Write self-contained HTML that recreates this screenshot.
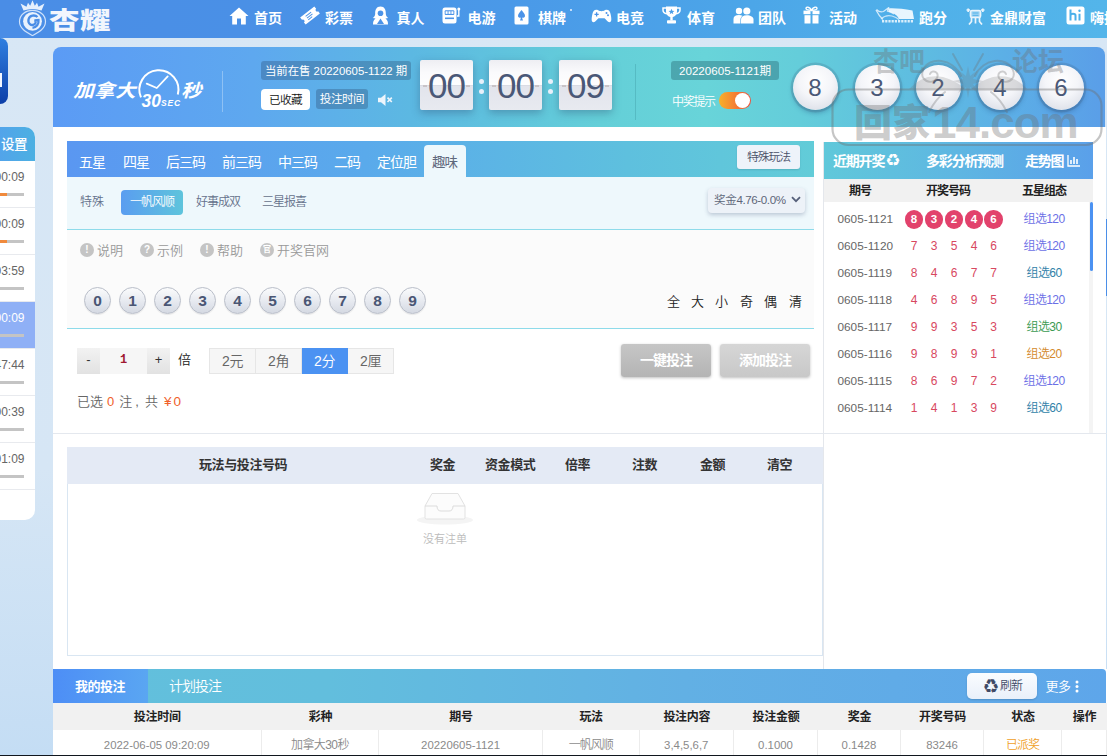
<!DOCTYPE html>
<html lang="zh-CN">
<head>
<meta charset="utf-8">
<title>加拿大30秒</title>
<style>
*{box-sizing:border-box;margin:0;padding:0}
html,body{width:1107px;height:756px;overflow:hidden}
body{position:relative;background:linear-gradient(180deg,#d8e7f5 0%,#d6e6f5 62%,#c4ddf4 100%);font-family:"Liberation Sans","Noto Sans CJK SC",sans-serif;font-size:12px;color:#333;line-height:1;font-weight:350}
.abs{position:absolute}
/* header */
#hdr{position:absolute;left:0;top:0;width:1107px;height:37.5px;background:linear-gradient(90deg,#4a8de6 0%,#4a90e6 22%,#4a99e8 46%,#4ca6e8 68%,#50b0e9 82%,#53b5ea 100%)}
#hdr .nav{position:absolute;top:0;height:37px;line-height:36px;color:#fff;font-weight:bold;font-size:14px;white-space:nowrap}
#hdr .nav svg{position:absolute;top:0;left:0}
#logo{position:absolute;left:49px;top:1px;font-size:30.5px;font-weight:900;color:#f2f6fd;line-height:37px;letter-spacing:0.5px;transform:scaleY(.8);transform-origin:0 22px;white-space:nowrap}
/* left */
#lblue{position:absolute;left:0;top:38px;width:8px;height:66px;background:linear-gradient(180deg,#2f7fe0,#0d3fa8);border-radius:0 8px 8px 0}
#lset{position:absolute;left:0;top:127px;width:35px;height:393px;background:#fff;border-radius:0 10px 10px 0;overflow:hidden}
#lset .h{font-weight:500;height:34px;background:linear-gradient(90deg,#52a4ea,#4cb0e2);color:#fff;font-size:13.5px;line-height:35px;padding-left:1px;letter-spacing:-.5px}
#lset .r{height:47px;border-bottom:1px solid #e8eaee;position:relative;color:#666;font-size:12px}
#lset .r span{position:absolute;right:10.5px;top:10px;white-space:nowrap}
#lset .r i{position:absolute;left:0;top:32px;width:24px;height:3px;background:#c4c4c4}
#lset .r i.o{background:linear-gradient(90deg,#f08a3c 0,#f08a3c 7px,#c4c4c4 7px)}
#lset .r.on{background:#8fb0f6;color:#fff}
/* banner */
#ban{position:absolute;left:53px;top:47px;width:1052px;height:80px;border-radius:8px 8px 0 0;background:linear-gradient(90deg,#5b9bf5 0%,#5ea8ef 19%,#5cb8e2 34%,#64cfd8 52%,#68d4d9 62%,#64cdda 71%,#5fc0df 80%,#5cb0e6 90%,#5a9ee8 100%)}
#main{position:absolute;left:53px;top:127px;width:1053px;height:542px;background:#fff}

/* banner items */
.badge{font-weight:400;position:absolute;height:19px;line-height:19px;border-radius:3px;background:rgba(40,70,110,.32);color:#fff;font-size:11.6px;text-align:center;white-space:nowrap}
.flip{position:absolute;top:13px;width:53px;height:50px;border-radius:2px;background:linear-gradient(180deg,#eeeef3 0%,#fafafc 25%,#fdfdfe 49%,#d4d7e0 50%,#e2e4ec 53%,#e8eaf0 100%);box-shadow:0 3px 8px rgba(40,60,100,.35);color:#4a5877;font-size:35px;line-height:52px;text-align:center;letter-spacing:-1px}
.flip:before,.flip:after{content:"";position:absolute;top:25px;width:4px;height:1.5px;background:#c9c4c8}
.flip:before{left:3px}.flip:after{right:3px}
.colon{position:absolute;width:5px;height:5px;border-radius:50%;background:#e8f0fa}
.ball{position:absolute;top:17.5px;width:45px;height:45px;margin-left:1.5px;border-radius:50%;background:radial-gradient(circle at 50% 35%,#ffffff 0%,#f4f5f9 45%,#dfe2ea 80%,#cfd3de 100%);box-shadow:0 0 0 2.5px rgba(60,90,120,.2),0 3px 5px rgba(30,60,110,.35);color:#4a5877;font-size:24px;line-height:45px;text-align:center}

/* main */
#tabs{position:absolute;left:14px;top:14px;width:747px;height:36px;background:linear-gradient(90deg,#5a97f1 0%,#5ba2ee 22%,#5aaaeb 40%,#5ec0de 75%,#62ccd8 100%)}
#tabs span{position:absolute;top:1px;height:35px;line-height:41px;color:#fff;font-weight:400;font-size:14px;letter-spacing:-1px;white-space:nowrap}
#tabs span.on{top:4px;height:32px;line-height:35px;background:#eef8fc;color:#5f687c;font-size:13.5px;border-radius:4px 4px 0 0;width:42px;text-align:center;padding-right:1px}
#sub{position:absolute;left:14px;top:50px;width:747px;height:53px;background:#eef8fc;border-bottom:1px solid #8edbea}
#sub span{position:absolute;top:19px;font-size:12px;color:#65718b;letter-spacing:0;white-space:nowrap}
.help{position:absolute;top:117px;font-size:13px;color:#999;white-space:nowrap;line-height:14px}
.help i{position:absolute;left:-17px;top:-1px;width:14px;height:14px;border-radius:50%;background:#c4c4c4;color:#fff;font-style:normal;font-size:10px;font-weight:bold;line-height:14px;text-align:center}
.nb{position:absolute;top:159.5px;width:27px;height:27px;border-radius:50%;border:1px solid #b9bec9;background:linear-gradient(180deg,#fafbfc 0%,#e4e7ee 60%,#d5d9e2 100%);color:#4a5674;font-size:15.5px;font-weight:bold;line-height:25px;text-align:center;box-shadow:0 1px 1px rgba(0,0,0,.08)}
.qk{position:absolute;top:168px;font-size:13px;color:#222}
.ub{position:absolute;top:220.5px;height:26px;width:46px;background:#f6f6f6;border:1px solid #e6e6e6;border-left:none;color:#666;font-size:14px;text-align:center;line-height:24px;letter-spacing:-.5px}
.gbtn{position:absolute;top:217px;height:33px;width:90px;border-radius:3px;color:#fff;font-size:14px;font-weight:bold;letter-spacing:-1px;text-align:center;line-height:32px;box-shadow:0 1px 3px rgba(0,0,0,.25)}
#tbl{position:absolute;left:14px;top:320px;width:756px;height:209px;border:1px solid #d9e6f2;background:#fff}
#tbl .th{position:absolute;left:-1px;top:-1px;width:756px;height:36.5px;background:#e4eaf5}
#tbl .th span{position:absolute;top:0;line-height:36.5px;font-size:13px;font-weight:bold;color:#333;letter-spacing:-.4px;white-space:nowrap}

/* right panel */
#rp{position:absolute;left:824px;top:142px;width:269px;height:291px;background:#fff;overflow:hidden}
#rp .h{position:absolute;left:0;top:0;width:269px;height:36.5px;background:linear-gradient(90deg,#60c8da 0%,#5eb6e2 50%,#5aa0ea 100%)}
#rp .h span{position:absolute;top:0;line-height:38px;color:#fff;font-size:14px;font-weight:bold;letter-spacing:-1.2px;white-space:nowrap}
#rp .sh{position:absolute;left:0;top:36.5px;width:269px;height:23.5px;background:#f1f1f1}
#rp .sh span{position:absolute;top:0;line-height:24px;font-size:12px;font-weight:bold;color:#222;letter-spacing:-1px;white-space:nowrap}
#rp .row{position:absolute;left:0;width:270px;height:27px;line-height:27px;font-size:11.8px;color:#666;white-space:nowrap}
#rp .row .q{position:absolute;left:13.5px}
#rp .row .n{position:absolute;width:20px;text-align:center;color:#d8485f;font-size:12px}
#rp .row .rb{position:absolute;top:4px;width:18.5px;height:18.5px;border-radius:50%;background:#e2426c;color:#fff;font-size:11.5px;font-weight:bold;line-height:18.5px;text-align:center}
#rp .row .z{position:absolute;left:180px;width:80px;text-align:center;letter-spacing:-.6px;font-size:12px}
/* bottom */
#bt{position:absolute;left:53px;top:669px;width:1054px;height:87px;background:#fff}
#bt .bar{position:absolute;left:0;top:0;width:1053px;height:34px;border-radius:0 4px 0 0;background:linear-gradient(90deg,#62c0dc 0%,#62bedd 26%,#62b0e4 60%,#5ea6ea 100%)}
#bt .bar span{position:absolute;top:0;line-height:35px;color:#fff;white-space:nowrap}
#bt .thr{position:absolute;left:0;top:34px;width:1054px;height:27px;background:#f1f1f1}
#bt .thr span{position:absolute;top:0;line-height:29px;color:#2c3146;font-size:12px;font-weight:bold;color:#222;text-align:center;letter-spacing:-.3px;white-space:nowrap}
#bt .tr span{position:absolute;top:61px;height:27px;line-height:30px;font-size:11.4px;color:#8a8a8a;text-align:center;white-space:nowrap;border-right:1px solid #ececec}
</style>
</head>
<body>
<div id="hdr">
 <svg class="abs" style="left:17px;top:0" width="32" height="37" viewBox="0 0 32 37"><path d="M6.500 10.500 L3.500 3.500 L9.500 6.800 L11 2.800 L13.200 5.800 L15.500 0.300 L17.800 5.800 L20 2.800 L21.500 6.800 L27.500 3.500 L24.500 10.500 Q15.500 7.500 6.500 10.500 Z" fill="#e6f0fd"/><path d="M15.500 10.300 C22.500 10.300 28.500 15 28.500 21.500 C28.500 28.500 22 32 15.500 35.600 C9 32 2.500 28.500 2.500 21.500 C2.500 15 8.500 10.300 15.500 10.300 Z" fill="none" stroke="#cfe2fb" stroke-width="1.200"/><circle cx="15.500" cy="21.300" r="9.400" fill="#e9f2fd"/><path d="M20.500 17 C18 14.500 12.500 15 11.500 19.500 C10.800 23.500 14 26 17 24.500 C19 23.500 19.300 21 17.500 20.500 L21.500 20 C22 24 19.500 27.500 15.500 27.800" fill="none" stroke="#4a8de6" stroke-width="2.300"/></svg>
 <div id="logo">杏耀</div>
 <svg class="abs" style="left:229px;top:7px" width="20" height="18" viewBox="0 0 20 18"><path d="M10 0.5 L0.5 9 H3.2 V17.5 H8 V11.5 H12 V17.5 H16.8 V9 H19.5 Z" fill="#fff"/></svg><span class="nav" style="left:254px">首页</span>
 <svg class="abs" style="left:300px;top:6px" width="20" height="19" viewBox="0 0 20 19"><g transform="rotate(-38 10 9.5)"><path d="M1 5 H19 V8 A1.6 1.6 0 0 0 19 11.2 V14 H1 V11.2 A1.6 1.6 0 0 0 1 8 Z" fill="#fff"/><path d="M6 7.5H13M6 9.7H13M6 11.8H11" stroke="#4b93e8" stroke-width="1"/></g></svg><span class="nav" style="left:325px">彩票</span>
 <svg class="abs" style="left:372px;top:6px" width="17" height="19" viewBox="0 0 17 19"><path d="M8.5 0.5 C4.5 0.5 3 4 3.2 7.5 C3.3 9.5 2 11 0.8 12 L3.5 12.6 C1.5 14 1 16 1 18.5 H16 C16 16 15.5 14 13.5 12.6 L16.2 12 C15 11 13.7 9.5 13.8 7.5 C14 4 12.5 0.5 8.5 0.5 Z" fill="#fff"/><circle cx="8.5" cy="7.2" r="2.8" fill="#4b93e8"/><path d="M5 18 L8.5 12.5 L12 18 Z" fill="#4b93e8"/></svg><span class="nav" style="left:396.5px">真人</span>
 <svg class="abs" style="left:442px;top:7px" width="19" height="17" viewBox="0 0 19 17"><rect x="0.5" y="0.5" width="14" height="16" rx="2.5" fill="#fff"/><rect x="2.7" y="3.3" width="9.6" height="4.6" rx="1" fill="#4b93e8"/><rect x="3.6" y="4.3" width="2" height="2.6" fill="#fff"/><rect x="6.5" y="4.3" width="2" height="2.6" fill="#fff"/><rect x="9.4" y="4.3" width="2" height="2.6" fill="#fff"/><rect x="3" y="10.5" width="9" height="1.6" fill="#4b93e8"/><path d="M16.8 2.5 V9 H15" stroke="#fff" stroke-width="1.4" fill="none"/><circle cx="16.8" cy="2" r="1.5" fill="#fff"/></svg><span class="nav" style="left:467.5px">电游</span>
 <svg class="abs" style="left:514px;top:6px" width="15" height="19" viewBox="0 0 15 19"><rect x="0.5" y="0.5" width="14" height="18" rx="1.5" fill="#fff"/><path d="M7.5 4 C9.5 6.5 11 8 11 10 A2 2 0 0 1 8 11.5 L9 14.5 H6 L7 11.5 A2 2 0 0 1 4 10 C4 8 5.5 6.5 7.5 4 Z" fill="#4b93e8"/></svg><span class="nav" style="left:538px">棋牌</span>
 <svg class="abs" style="left:591px;top:9px" width="21" height="14" viewBox="0 0 21 14"><path d="M5.5 0.8 C3 0.8 1.8 2.5 1.2 6 C0.6 9.5 0 13.2 2.6 13.2 C4.5 13.2 5.5 10.5 7.5 9.2 H13.5 C15.5 10.5 16.5 13.2 18.4 13.2 C21 13.2 20.4 9.5 19.8 6 C19.2 2.5 18 0.8 15.5 0.8 C13.5 0.8 13.5 2.2 10.5 2.2 C7.5 2.2 7.5 0.8 5.5 0.8 Z" fill="#fff"/><path d="M5.6 3.2V7.4M3.5 5.3H7.7" stroke="#4b93e8" stroke-width="1.3"/><circle cx="15.5" cy="4" r="1" fill="#4b93e8"/><circle cx="17" cy="6.3" r="1" fill="#4b93e8"/></svg><span class="nav" style="left:616px">电竞</span>
 <svg class="abs" style="left:662px;top:6px" width="19" height="18" viewBox="0 0 19 18"><path d="M4 0.5 H15 V5 C15 9 12.5 11 9.5 11 C6.5 11 4 9 4 5 Z" fill="#fff"/><path d="M4 2 H1 V4 C1 6.5 3 7.5 5 7.8 M15 2 H18 V4 C18 6.5 16 7.5 14 7.8" fill="none" stroke="#fff" stroke-width="1.5"/><rect x="8.3" y="10.5" width="2.4" height="4" fill="#fff"/><rect x="5" y="14.2" width="9" height="3.3" rx="0.8" fill="#fff"/><path d="M9.5 2.8 L10.3 4.8 L12.4 4.9 L10.8 6.2 L11.3 8.3 L9.5 7.1 L7.7 8.3 L8.2 6.2 L6.6 4.9 L8.7 4.8 Z" fill="#4b9ee8"/></svg><span class="nav" style="left:687px">体育</span>
 <svg class="abs" style="left:733px;top:7px" width="21" height="17" viewBox="0 0 21 17"><circle cx="6" cy="4" r="3.2" fill="#fff"/><path d="M0.5 16.5 V12 C0.5 9.5 2.5 8 6 8 C7.5 8 8.6 8.3 9.4 8.8 C8 10 7.4 11.5 7.4 13 V16.5 Z" fill="#fff"/><circle cx="13.8" cy="4" r="3.6" fill="#fff"/><path d="M8 16.5 V12.5 C8 10 10 8.3 13.8 8.3 C17.6 8.3 20.5 10 20.5 12.5 V16.5 Z" fill="#fff"/></svg><span class="nav" style="left:758px">团队</span>
 <svg class="abs" style="left:803px;top:6px" width="17" height="18" viewBox="0 0 17 18"><path d="M8.5 4.2 C6.5 0.5 3 0.5 3 2.5 C3 4 6 4.2 8.5 4.2 C11 4.2 14 4 14 2.5 C14 0.5 10.500 0.5 8.5 4.2 Z" fill="none" stroke="#fff" stroke-width="1.4"/><rect x="0.5" y="4.6" width="7" height="3.6" fill="#fff"/><rect x="9.5" y="4.6" width="7" height="3.6" fill="#fff"/><rect x="1.5" y="9.2" width="6" height="8.3" fill="#fff"/><rect x="9.5" y="9.2" width="6" height="8.3" fill="#fff"/></svg><span class="nav" style="left:829px">活动</span>
 <svg class="abs" style="left:875px;top:7px" width="40" height="17" viewBox="0 0 40 17"><path d="M1 3 C3 7 5 10 8 12.5 M1.500 2.500 C4 5 6 5.500 8.500 4.500 L13.500 0.800 L12.500 4 C15 4.500 17 5.500 19 7" fill="none" stroke="#dff1fd" stroke-width="1.300" stroke-opacity=".9"/><path d="M13 1.500 C20 1 28 2 37.500 3.500 L39 12 H24 C22 8 19 6 14 5 Z" fill="#f4fbff" fill-opacity=".93"/><path d="M6 12 C9 9 13 8 17 9 C20 10 22 11 24 12.500" fill="none" stroke="#dff1fd" stroke-width="1.200" stroke-opacity=".8"/><path d="M7 14.300 H39" stroke="#eaf6fe" stroke-width="2.600" stroke-dasharray="2.200 1" stroke-opacity=".9"/></svg><span class="nav" style="left:919px">跑分</span>
 <svg class="abs" style="left:966px;top:8px" width="19" height="17" viewBox="0 0 19 17"><g fill="none" stroke="#e9f4fc" stroke-width="1.7"><path d="M2.2 0.5 V4 M16.800 0.500 V4 M0.500 2 H4 M15 2 H18.500"/><rect x="4.500" y="2.500" width="10" height="7" rx="1.500" fill="#e9f4fc" fill-opacity=".55"/><path d="M6.500 5 H12.500 M6.500 7.300 H12.500" stroke="#4fb0e9" stroke-width="1"/><path d="M5.500 9.500 V13.500 L3 16.500 M13.500 9.500 V13.500 L16 16.500 M9.500 9.500 V15.500"/></g></svg><span class="nav" style="left:990px">金鼎财富</span>
 <svg class="abs" style="left:1066px;top:6px" width="19" height="19" viewBox="0 0 19 19"><rect x="0.5" y="0.5" width="18" height="18" rx="2.5" fill="#fff"/><path d="M4.500 3.500 V14.500 M4.500 9.500 C4.500 7 9.500 7 9.500 9.500 V14.500 M13.500 7.800 V14.500" fill="none" stroke="#4bb0ea" stroke-width="2"/><circle cx="13.500" cy="4.800" r="1.2" fill="#4bb0ea"/></svg><span class="nav" style="left:1090px">嗨播</span>
 <i class="abs" style="left:570px;top:9px;width:2px;height:2px;border-radius:50%;background:#e8f2ff"></i>
</div>
<div id="lblue"><i class="abs" style="left:0;top:35px;width:2px;height:14px;background:#f2f6ff"></i></div>
<div id="lset">
 <div class="h">设置</div>
 <div class="r"><span>00:09</span><i class="o"></i></div>
 <div class="r"><span>00:09</span><i class="o"></i></div>
 <div class="r"><span>03:59</span><i></i></div>
 <div class="r on"><span>00:09</span><i></i></div>
 <div class="r"><span>47:44</span><i></i></div>
 <div class="r"><span>00:39</span><i></i></div>
 <div class="r"><span>01:09</span><i></i></div>
</div>
<div id="ban">
 <div class="abs" style="left:20.3px;top:31.5px;font-size:20.5px;font-style:italic;color:#fff;letter-spacing:.3px;font-weight:700;white-space:nowrap;line-height:24px;transform:scaleY(.88)">加拿大</div>
 <svg class="abs" style="left:81.500px;top:19px" width="50" height="45" viewBox="0 0 50 45"><path d="M6 31.400 A19.500 19.500 0 1 1 42.800 28.500" fill="none" stroke="#fff" stroke-width="2"/><path d="M11.700 17.600 L21.800 22 L32.700 10.400" fill="none" stroke="#fff" stroke-width="1.800" stroke-linecap="round" stroke-linejoin="round"/><text x="6.500" y="40.500" font-family="Liberation Sans,sans-serif" font-weight="bold" font-style="italic" font-size="17.500" fill="#fff" letter-spacing="0">30</text><text x="26" y="40.300" font-family="Liberation Sans,sans-serif" font-weight="bold" font-style="italic" font-size="8.500" fill="#fff" letter-spacing=".8">SEC</text></svg>
 <div class="abs" style="left:128px;top:31.5px;font-size:20.5px;font-style:italic;color:#fff;font-weight:700;line-height:24px;transform:scaleY(.88)">秒</div>
 <div class="abs" style="left:169px;top:24px;width:1px;height:41px;background:rgba(255,255,255,.3)"></div>
 <div class="badge" style="left:208px;top:13.5px;width:150px;height:19.5px;line-height:20px;font-size:11.4px">当前在售 20220605-1122 期</div>
 <div class="abs" style="left:208px;top:42px;width:49px;height:21px;line-height:21px;border-radius:4px;background:#fff;color:#111;font-size:11.6px;letter-spacing:-.6px;text-align:center">已收藏</div>
 <div class="badge" style="left:263px;top:42px;width:52px;height:20px;line-height:20px;letter-spacing:-.5px">投注时间</div>
 <svg class="abs" style="left:324.500px;top:46.500px" width="16" height="12" viewBox="0 0 16 12"><path d="M0 3.800h3l4.500-3.800v12L3 8.200H0z" fill="#edf5fc"/><path d="M9.500 3.700l4.300 4.300m0-4.300l-4.300 4.300" stroke="#edf5fc" stroke-width="1.700"/></svg>
 <div class="flip" style="left:367px">00</div>
 <div class="flip" style="left:436px">00</div>
 <div class="flip" style="left:506px">09</div>
 <div class="colon" style="left:426px;top:32px"></div><div class="colon" style="left:426px;top:42px"></div>
 <div class="colon" style="left:495px;top:32px"></div><div class="colon" style="left:495px;top:42px"></div>
 <div class="abs" style="left:581.5px;top:17px;width:1px;height:56px;background:rgba(30,110,125,.22)"></div>
 <div class="badge" style="left:618px;top:13.5px;width:108px;height:19.5px;line-height:20px;background:rgba(30,90,100,.36)">20220605-1121期</div>
 <div class="abs" style="left:619px;top:49px;color:#fff;font-size:12px;letter-spacing:-1.3px;white-space:nowrap">中奖提示</div>
 <div class="abs" style="left:666px;top:45px;width:32px;height:17px;border-radius:9px;background:linear-gradient(90deg,#f7b02a,#f0503c)"><i class="abs" style="right:1px;top:1px;width:15px;height:15px;border-radius:50%;background:#fff"></i></div>
 <div class="ball" style="left:738px">8</div>
 <div class="ball" style="left:800px">3</div>
 <div class="ball" style="left:861px">2</div>
 <div class="ball" style="left:923px">4</div>
 <div class="ball" style="left:984px">6</div>
</div>
<div id="main">
 <div id="tabs">
  <span style="left:12px">五星</span><span style="left:56px">四星</span><span style="left:99px">后三码</span><span style="left:155px">前三码</span><span style="left:211px">中三码</span><span style="left:267px">二码</span><span style="left:310px">定位胆</span><span class="on" style="left:357px">趣味</span>
  <div class="abs" style="left:670px;top:4px;width:63px;height:24px;border-radius:3px;background:#eef3fa;color:#4a5068;font-size:11.8px;letter-spacing:-1px;text-align:center;line-height:24px;box-shadow:0 1px 2px rgba(0,0,0,.12)">特殊玩法</div>
 </div>
 <div id="sub">
  <span style="left:13px">特殊</span>
  <div class="abs" style="left:54px;top:13px;width:62px;height:25px;border-radius:4px;background:linear-gradient(90deg,#5a9df0,#5ec4dc);color:#fff;font-size:12px;letter-spacing:-1px;text-align:center;line-height:25px">一帆风顺</div>
  <span style="left:129px;letter-spacing:-1px">好事成双</span><span style="left:195px;letter-spacing:-1px">三星报喜</span>
  <div class="abs" style="left:641px;top:10.5px;width:97px;height:25px;border-radius:4px;background:#edf2f8;box-shadow:0 2px 4px rgba(60,80,120,.28);color:#5d6678;font-size:11.6px;line-height:24px;padding-left:6px;letter-spacing:-.4px">奖金4.76-0.0%<svg class="abs" style="right:4.5px;top:8.5px" width="10" height="7" viewBox="0 0 10 7"><path d="M1 1.2l4 4 4-4" fill="none" stroke="#56607a" stroke-width="1.8"/></svg></div>
 </div>
 <div class="abs" style="left:14px;top:103px;width:747px;height:98px;background:#fbfbfb"></div>
 <div class="help" style="left:44px"><i>!</i>说明</div>
 <div class="help" style="left:104px"><i>?</i>示例</div>
 <div class="help" style="left:164px"><i>!</i>帮助</div>
 <div class="help" style="left:224px"><i style="font-size:8px">官</i>开奖官网</div>
 <div class="nb" style="left:31px">0</div><div class="nb" style="left:66px">1</div><div class="nb" style="left:101px">2</div><div class="nb" style="left:136px">3</div><div class="nb" style="left:171px">4</div><div class="nb" style="left:206px">5</div><div class="nb" style="left:241px">6</div><div class="nb" style="left:276px">7</div><div class="nb" style="left:311px">8</div><div class="nb" style="left:346px">9</div>
 <span class="qk" style="left:614px">全</span><span class="qk" style="left:638px">大</span><span class="qk" style="left:662px">小</span><span class="qk" style="left:687px">奇</span><span class="qk" style="left:711px">偶</span><span class="qk" style="left:736px">清</span>
 <div class="abs" style="left:14px;top:201px;width:747px;height:1px;background:#8edbea"></div>
 <div class="abs" style="left:24px;top:220.5px;width:23px;height:26px;background:linear-gradient(180deg,#f2f2f2,#e2e2e2);color:#333;font-size:13px;text-align:center;line-height:24px">-</div>
 <div class="abs" style="left:47px;top:220.5px;width:47px;height:26px;background:#f6f6f6;color:#a01830;font-size:12px;font-weight:bold;text-align:center;line-height:25px;font-family:'Liberation Mono',monospace">1</div>
 <div class="abs" style="left:94px;top:220.5px;width:23px;height:26px;background:linear-gradient(180deg,#f2f2f2,#e2e2e2);color:#333;font-size:13px;text-align:center;line-height:24px">+</div>
 <div class="abs" style="left:125px;top:226px;font-size:13px;color:#222">倍</div>
 <div class="ub" style="left:156px;border-left:1px solid #e6e6e6;width:47px">2元</div><div class="ub" style="left:203px">2角</div><div class="ub" style="left:249px;background:#4b92f2;border-color:#4b92f2;color:#fff">2分</div><div class="ub" style="left:295px">2厘</div>
 <div class="gbtn" style="left:568px;background:linear-gradient(180deg,#c6c6c6,#b4b4b4)">一键投注</div>
 <div class="gbtn" style="left:667px;background:linear-gradient(180deg,#d6d6d6,#c8c8c8)">添加投注</div>
 <div class="abs" style="left:24px;top:268px;font-size:13px;color:#666;white-space:nowrap">已选<b style="color:#f0602a;font-weight:normal;margin:0 5px 0 4px">0</b>注<i style="font-style:normal;margin:0 6px 0 3px">,</i>共<b style="color:#f0602a;font-weight:normal;margin-left:6px;letter-spacing:2px;font-size:13.5px">¥0</b></div>
 <div class="abs" style="left:0;top:305.5px;width:1054px;height:1px;background:#e4e8ee"></div>
 <div id="tbl">
  <div class="th"><span style="left:132px">玩法与投注号码</span><span style="left:363px">奖金</span><span style="left:418px">资金模式</span><span style="left:498px">倍率</span><span style="left:565px">注数</span><span style="left:633px">金额</span><span style="left:700px">清空</span></div>
  <svg class="abs" style="left:348px;top:42.5px" width="58" height="34" viewBox="-6 0 58 34"><ellipse cx="23" cy="29" rx="28" ry="4.5" fill="#f4f4f4"/><path d="M3 15 L10 2.5 H36 L43 15 V26.5 Q43 28 41.5 28 H4.5 Q3 28 3 26.5 Z" fill="#fcfcfc" stroke="#e2e2e2" stroke-width="1"/><path d="M3 15 H15 Q15 20 19 20 H27 Q31 20 31 15 H43" fill="none" stroke="#dcdcdc" stroke-width="1"/></svg>
  <div class="abs" style="left:355px;top:86px;font-size:11px;color:#bbb;white-space:nowrap">没有注单</div>
 </div>
 <div class="abs" style="left:770px;top:15px;width:1px;height:527px;background:#e4e7ec"></div>
</div>
<div id="rp">
 <div class="h"><span style="left:9px">近期开奖</span><i class="abs" style="left:61.5px;top:10px;font-family:'DejaVu Sans',sans-serif;font-style:normal;font-size:17px;line-height:17px;color:#fff;font-weight:normal;letter-spacing:0">♻</i><span style="left:102px">多彩分析预测</span><span style="left:201px">走势图</span><svg class="abs" style="left:243px;top:12.500px" width="13" height="12" viewBox="0 0 13 12"><path d="M1 0v11h12" fill="none" stroke="#fff" stroke-width="1.3"/><path d="M4 9V5M7 9V2M10 9V4" stroke="#fff" stroke-width="1.6"/></svg></div>
 <div class="sh"><span style="left:25px">期号</span><span style="left:102px">开奖号码</span><span style="left:198px">五星组态</span></div>
 <div class="row" style="top:64px"><span class="q">0605-1121</span><span class="rb" style="left:80.75px">8</span><span class="rb" style="left:100.75px">3</span><span class="rb" style="left:120.75px">2</span><span class="rb" style="left:140.75px">4</span><span class="rb" style="left:160.25px">6</span><span class="z" style="color:#6b6fe6">组选120</span></div>
 <div class="row" style="top:91px"><span class="q">0605-1120</span><span class="n" style="left:80px">7</span><span class="n" style="left:100px">3</span><span class="n" style="left:120px">5</span><span class="n" style="left:140px">4</span><span class="n" style="left:159.5px">6</span><span class="z" style="color:#6b6fe6">组选120</span></div>
 <div class="row" style="top:118px"><span class="q">0605-1119</span><span class="n" style="left:80px">8</span><span class="n" style="left:100px">4</span><span class="n" style="left:120px">6</span><span class="n" style="left:140px">7</span><span class="n" style="left:159.5px">7</span><span class="z" style="color:#2f7fa8">组选60</span></div>
 <div class="row" style="top:145px"><span class="q">0605-1118</span><span class="n" style="left:80px">4</span><span class="n" style="left:100px">6</span><span class="n" style="left:120px">8</span><span class="n" style="left:140px">9</span><span class="n" style="left:159.5px">5</span><span class="z" style="color:#6b6fe6">组选120</span></div>
 <div class="row" style="top:172px"><span class="q">0605-1117</span><span class="n" style="left:80px">9</span><span class="n" style="left:100px">9</span><span class="n" style="left:120px">3</span><span class="n" style="left:140px">5</span><span class="n" style="left:159.5px">3</span><span class="z" style="color:#3a9a52">组选30</span></div>
 <div class="row" style="top:199px"><span class="q">0605-1116</span><span class="n" style="left:80px">9</span><span class="n" style="left:100px">8</span><span class="n" style="left:120px">9</span><span class="n" style="left:140px">9</span><span class="n" style="left:159.5px">1</span><span class="z" style="color:#d48a2c">组选20</span></div>
 <div class="row" style="top:226px"><span class="q">0605-1115</span><span class="n" style="left:80px">8</span><span class="n" style="left:100px">6</span><span class="n" style="left:120px">9</span><span class="n" style="left:140px">7</span><span class="n" style="left:159.5px">2</span><span class="z" style="color:#6b6fe6">组选120</span></div>
 <div class="row" style="top:253px"><span class="q">0605-1114</span><span class="n" style="left:80px">1</span><span class="n" style="left:100px">4</span><span class="n" style="left:120px">1</span><span class="n" style="left:140px">3</span><span class="n" style="left:159.5px">9</span><span class="z" style="color:#2f7fa8">组选60</span></div>
 <div class="abs" style="left:265px;top:60px;width:4px;height:231px;background:#f4f4f4"></div><div class="abs" style="left:265.5px;top:60px;width:3.5px;height:69px;background:#4b92f2;border-radius:2px"></div>
</div>
<div id="bt">
 <div class="bar"><div class="abs" style="left:0;top:0;width:95px;height:34px;background:linear-gradient(90deg,#4d8ef6,#5aa6f2)"></div><span style="left:22px;font-size:13px;font-weight:bold;letter-spacing:-.5px">我的投注</span><span style="left:116px;font-size:14px;letter-spacing:-1px">计划投注</span><div class="abs" style="left:914px;top:4px;width:70px;height:26px;border-radius:5px;background:linear-gradient(180deg,#fafcff,#e9f0fa);box-shadow:0 1px 2px rgba(0,0,0,.15);color:#3f4a66;font-size:12px;letter-spacing:-1px;line-height:26px;padding-left:33px">刷新<i class="abs" style="left:16.500px;top:6px;font-family:'DejaVu Sans',sans-serif;font-style:normal;font-size:14px;line-height:14px;color:#3f4a66;letter-spacing:0">♻</i></div><span style="left:992.5px;font-size:13px;letter-spacing:-.6px">更多</span><svg class="abs" style="left:1021.5px;top:11px" width="4" height="13" viewBox="0 0 4 13"><circle cx="2" cy="2" r="1.5" fill="#fff"/><circle cx="2" cy="6.5" r="1.5" fill="#fff"/><circle cx="2" cy="11" r="1.5" fill="#fff"/></svg></div>
 <div class="thr"><span style="left:0px;width:208.5px">投注时间</span><span style="left:208.5px;width:117.89999999999998px">彩种</span><span style="left:326.4px;width:163.3px">期号</span><span style="left:489.7px;width:96.90000000000003px">玩法</span><span style="left:586.6px;width:94.39999999999998px">投注内容</span><span style="left:681px;width:84px">投注金额</span><span style="left:765px;width:83px">奖金</span><span style="left:848px;width:83px">开奖号码</span><span style="left:931px;width:78px">状态</span><span style="left:1009px;width:45px">操作</span></div>
 <div class="tr"><span style="left:0px;width:208.5px">2022-06-05 09:20:09</span><span style="left:208.5px;width:117.89999999999998px;letter-spacing:-.6px;font-size:12px">加拿大30秒</span><span style="left:326.4px;width:163.3px">20220605-1121</span><span style="left:489.7px;width:96.90000000000003px;letter-spacing:-1px;font-size:12px">一帆风顺</span><span style="left:586.6px;width:94.39999999999998px">3,4,5,6,7</span><span style="left:681px;width:84px">0.1000</span><span style="left:765px;width:83px">0.1428</span><span style="left:848px;width:83px">83246</span><span style="left:931px;width:78px;color:#f0a028;letter-spacing:-1px;font-size:12px">已派奖</span><span style="left:1009px;width:45px"></span></div>
</div>
<div class="abs" style="left:0;top:754.5px;width:1107px;height:2px;background:#10161e"></div>
<div class="abs" style="left:1106px;top:219px;width:1px;height:77px;background:#4b8fe8"></div>
<svg class="abs" style="left:825px;top:40px;pointer-events:none" width="282" height="112" viewBox="0 0 282 112">
 <g fill="#6e6e6e" fill-opacity=".36" font-family="Liberation Sans,Noto Sans CJK SC,sans-serif" font-weight="bold">
  <text x="48" y="31" font-size="26" font-family="Noto Sans CJK SC,sans-serif">杏吧</text>
  <text x="187" y="31" font-size="26" font-family="Noto Sans CJK SC,sans-serif">论坛</text>
  <text x="29" y="96" font-size="38" font-family="Noto Sans CJK SC,sans-serif" font-weight="900">回家</text>
  <text x="107" y="97.500" font-size="44" letter-spacing="-1">14.com</text>
 </g>
 <rect x="7.500" y="49.500" width="269" height="55.500" rx="16" fill="none" stroke="#6e6e6e" stroke-opacity=".4" stroke-width="2.200"/>
 <g fill="#707070" fill-opacity=".22" stroke="none">
  <path d="M140 49 L84 49 Q98 33 118 37 Q132 41 140 49 Z"/>
  <path d="M146 49 L202 49 Q188 33 168 37 Q154 41 146 49 Z"/>
  <path d="M143 26 L145 36 L153 30 L148 39 L158 41 L148 44 L153 53 L145 47 L143 58 L141 47 L133 53 L138 44 L128 41 L138 39 L133 30 L141 36 Z"/>
 </g>
 <g fill="none" stroke="#707070" stroke-opacity=".32" stroke-width="2" stroke-linecap="round">
  <path d="M136 36 C128 18 104 16 98 30 C94 40 106 46 112 38 C115 32 107 29 105 34"/>
  <path d="M150 36 C158 18 182 16 188 30 C192 40 180 46 174 38 C171 32 179 29 181 34"/>
  <path d="M128 14 L137 30 M158 14 L149 30"/>
  <path d="M120 52 C112 58 108 64 104 72 M166 52 C174 58 178 64 182 72"/>
 </g>
</svg>
</body>
</html>
